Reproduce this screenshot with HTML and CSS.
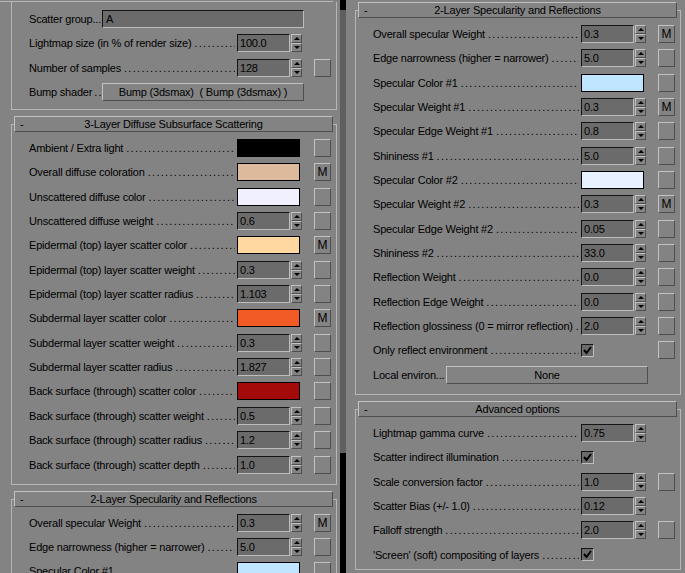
FILE: index.html
```html
<!DOCTYPE html>
<html>
	<head>
		<meta charset="UTF-8">
		<title>Subsurface shader</title>
		<link rel="stylesheet" href="styles.css">
	</head>
	<body>
		<!-- left rollout column -->
		<div class="col col-left">
			<div class="topline"></div>
			<div class="rollout first">
				<div class="body">
					<div class="row wide"><span class="lbl">Scatter group...</span><span class="field">A</span></div>
					<div class="row"><span class="lbl">Lightmap size (in % of render size)<i>..................................................</i></span><span class="spin"><span class="num">100.0</span><span class="arr"><b class="up"></b><b class="dn"></b></span></span></div>
					<div class="row"><span class="lbl">Number of samples<i>..................................................</i></span><span class="spin"><span class="num">128</span><span class="arr"><b class="up"></b><b class="dn"></b></span></span><span class="btn"></span></div>
					<div class="row wide"><span class="lbl">Bump shader<i>..................................................</i></span><span class="pbtn">Bump (3dsmax)&nbsp; ( Bump (3dsmax) )</span></div>
				</div>
			</div>

			<div class="rollout">
				<div class="head"><span class="minus">-</span><span>3-Layer Diffuse Subsurface Scattering</span></div>
				<div class="body">
					<div class="row"><span class="lbl">Ambient / Extra light<i>..................................................</i></span><span class="sw" style="background:#000000"></span><span class="btn"></span></div>
					<div class="row"><span class="lbl">Overall diffuse coloration<i>..................................................</i></span><span class="sw" style="background:#ddba9c"></span><span class="btn">M</span></div>
					<div class="row"><span class="lbl">Unscattered diffuse color<i>..................................................</i></span><span class="sw" style="background:#f1f0ff"></span><span class="btn"></span></div>
					<div class="row"><span class="lbl">Unscattered diffuse weight<i>..................................................</i></span><span class="spin"><span class="num">0.6</span><span class="arr"><b class="up"></b><b class="dn"></b></span></span><span class="btn"></span></div>
					<div class="row"><span class="lbl">Epidermal (top) layer scatter color<i>..................................................</i></span><span class="sw" style="background:#ffd7a1"></span><span class="btn">M</span></div>
					<div class="row"><span class="lbl">Epidermal (top) layer scatter weight<i>..................................................</i></span><span class="spin"><span class="num">0.3</span><span class="arr"><b class="up"></b><b class="dn"></b></span></span><span class="btn"></span></div>
					<div class="row"><span class="lbl">Epidermal (top) layer scatter radius<i>..................................................</i></span><span class="spin"><span class="num">1.103</span><span class="arr"><b class="up"></b><b class="dn"></b></span></span><span class="btn"></span></div>
					<div class="row"><span class="lbl">Subdermal layer scatter color<i>..................................................</i></span><span class="sw" style="background:#f25a26"></span><span class="btn">M</span></div>
					<div class="row"><span class="lbl">Subdermal layer scatter weight<i>..................................................</i></span><span class="spin"><span class="num">0.3</span><span class="arr"><b class="up"></b><b class="dn"></b></span></span><span class="btn"></span></div>
					<div class="row"><span class="lbl">Subdermal layer scatter radius<i>..................................................</i></span><span class="spin"><span class="num">1.827</span><span class="arr"><b class="up"></b><b class="dn"></b></span></span><span class="btn"></span></div>
					<div class="row"><span class="lbl">Back surface (through) scatter color<i>..................................................</i></span><span class="sw" style="background:#a30b0b"></span><span class="btn"></span></div>
					<div class="row"><span class="lbl">Back surface (through) scatter weight<i>..................................................</i></span><span class="spin"><span class="num">0.5</span><span class="arr"><b class="up"></b><b class="dn"></b></span></span><span class="btn"></span></div>
					<div class="row"><span class="lbl">Back surface (through) scatter radius<i>..................................................</i></span><span class="spin"><span class="num">1.2</span><span class="arr"><b class="up"></b><b class="dn"></b></span></span><span class="btn"></span></div>
					<div class="row"><span class="lbl">Back surface (through) scatter depth<i>..................................................</i></span><span class="spin"><span class="num">1.0</span><span class="arr"><b class="up"></b><b class="dn"></b></span></span><span class="btn"></span></div>
				</div>
			</div>

			<div class="rollout">
				<div class="head"><span class="minus">-</span><span>2-Layer Specularity and Reflections</span></div>
				<div class="body">
					<div class="row"><span class="lbl">Overall specular Weight<i>..................................................</i></span><span class="spin"><span class="num">0.3</span><span class="arr"><b class="up"></b><b class="dn"></b></span></span><span class="btn">M</span></div>
					<div class="row"><span class="lbl">Edge narrowness (higher = narrower)<i>..................................................</i></span><span class="spin"><span class="num">5.0</span><span class="arr"><b class="up"></b><b class="dn"></b></span></span><span class="btn"></span></div>
					<div class="row"><span class="lbl">Specular Color #1<i>..................................................</i></span><span class="sw" style="background:#c0e5ff"></span><span class="btn"></span></div>
				</div>
			</div>
		</div>

		<div class="scroll"><div class="thumb"></div><div class="track"></div><div class="thumb rest"></div></div>

		<!-- right rollout column -->
		<div class="col col-right">
			<div class="rollout">
				<div class="head"><span class="minus">-</span><span>2-Layer Specularity and Reflections</span></div>
				<div class="body">
					<div class="row"><span class="lbl">Overall specular Weight<i>..................................................</i></span><span class="spin"><span class="num">0.3</span><span class="arr"><b class="up"></b><b class="dn"></b></span></span><span class="btn">M</span></div>
					<div class="row"><span class="lbl">Edge narrowness (higher = narrower)<i>..................................................</i></span><span class="spin"><span class="num">5.0</span><span class="arr"><b class="up"></b><b class="dn"></b></span></span><span class="btn"></span></div>
					<div class="row"><span class="lbl">Specular Color #1<i>..................................................</i></span><span class="sw" style="background:#c0e5ff"></span><span class="btn"></span></div>
					<div class="row"><span class="lbl">Specular Weight #1<i>..................................................</i></span><span class="spin"><span class="num">0.3</span><span class="arr"><b class="up"></b><b class="dn"></b></span></span><span class="btn">M</span></div>
					<div class="row"><span class="lbl">Specular Edge Weight #1<i>..................................................</i></span><span class="spin"><span class="num">0.8</span><span class="arr"><b class="up"></b><b class="dn"></b></span></span><span class="btn"></span></div>
					<div class="row"><span class="lbl">Shininess #1<i>..................................................</i></span><span class="spin"><span class="num">5.0</span><span class="arr"><b class="up"></b><b class="dn"></b></span></span><span class="btn"></span></div>
					<div class="row"><span class="lbl">Specular Color #2<i>..................................................</i></span><span class="sw" style="background:#e7f1ff"></span><span class="btn"></span></div>
					<div class="row"><span class="lbl">Specular Weight #2<i>..................................................</i></span><span class="spin"><span class="num">0.3</span><span class="arr"><b class="up"></b><b class="dn"></b></span></span><span class="btn">M</span></div>
					<div class="row"><span class="lbl">Specular Edge Weight #2<i>..................................................</i></span><span class="spin"><span class="num">0.05</span><span class="arr"><b class="up"></b><b class="dn"></b></span></span><span class="btn"></span></div>
					<div class="row"><span class="lbl">Shininess #2<i>..................................................</i></span><span class="spin"><span class="num">33.0</span><span class="arr"><b class="up"></b><b class="dn"></b></span></span><span class="btn"></span></div>
					<div class="row"><span class="lbl">Reflection Weight<i>..................................................</i></span><span class="spin"><span class="num">0.0</span><span class="arr"><b class="up"></b><b class="dn"></b></span></span><span class="btn"></span></div>
					<div class="row"><span class="lbl">Reflection Edge Weight<i>..................................................</i></span><span class="spin"><span class="num">0.0</span><span class="arr"><b class="up"></b><b class="dn"></b></span></span><span class="btn"></span></div>
					<div class="row"><span class="lbl">Reflection glossiness (0 = mirror reflection)<i>..................................................</i></span><span class="spin"><span class="num">2.0</span><span class="arr"><b class="up"></b><b class="dn"></b></span></span><span class="btn"></span></div>
					<div class="row"><span class="lbl">Only reflect environment<i>..................................................</i></span><span class="chk"><svg width="11" height="11" viewBox="0 0 11 11"><polyline points="2,5 4.5,8 9,2" fill="none" stroke="#000" stroke-width="2"/></svg></span><span class="btn"></span></div>
					<div class="row wide"><span class="lbl">Local environ...</span><span class="pbtn">None</span></div>
				</div>
			</div>

			<div class="rollout last">
				<div class="head"><span class="minus">-</span><span>Advanced options</span></div>
				<div class="body">
					<div class="row"><span class="lbl">Lightmap gamma curve<i>..................................................</i></span><span class="spin"><span class="num">0.75</span><span class="arr"><b class="up"></b><b class="dn"></b></span></span></div>
					<div class="row"><span class="lbl">Scatter indirect illumination<i>..................................................</i></span><span class="chk"><svg width="11" height="11" viewBox="0 0 11 11"><polyline points="2,5 4.5,8 9,2" fill="none" stroke="#000" stroke-width="2"/></svg></span></div>
					<div class="row"><span class="lbl">Scale conversion factor<i>..................................................</i></span><span class="spin"><span class="num">1.0</span><span class="arr"><b class="up"></b><b class="dn"></b></span></span><span class="btn"></span></div>
					<div class="row"><span class="lbl">Scatter Bias (+/- 1.0)<i>..................................................</i></span><span class="spin"><span class="num">0.12</span><span class="arr"><b class="up"></b><b class="dn"></b></span></span></div>
					<div class="row"><span class="lbl">Falloff strength<i>..................................................</i></span><span class="spin"><span class="num">2.0</span><span class="arr"><b class="up"></b><b class="dn"></b></span></span><span class="btn"></span></div>
					<div class="row"><span class="lbl">'Screen' (soft) compositing of layers<i>..................................................</i></span><span class="chk"><svg width="11" height="11" viewBox="0 0 11 11"><polyline points="2,5 4.5,8 9,2" fill="none" stroke="#000" stroke-width="2"/></svg></span></div>
				</div>
			</div>
		</div>
	</body>
</html>
```

FILE: styles.css
```css
html, body{
	margin: 0;
	height: 573px;
	overflow: hidden;
}
body{
	background: #838383;
	color: #000;
	font: 11px/18px "Liberation Sans", Arial, sans-serif;
	letter-spacing: -0.2px;
	display: flex;
}
.col-left{
	width: 329px;
	padding-left: 11px;
	flex: none;
}
.col-right{
	padding: 2px 0 0 9px;
	flex: none;
}
.topline{
	height: 1px;
	margin: 1px 0 0 -11px;
	width: 333px;
	background: #b6b6b6;
}

/* scrollbar strip between the columns */
.scroll{
	width: 6px;
	flex: none;
	display: flex;
	flex-direction: column;
}
.scroll .thumb{
	height: 10px;
	background: #000;
}
.scroll .track{
	height: 443px;
	background: #5f5f5f;
}
.scroll .rest{
	flex: 1;
}

/* rollouts */
.rollout{
	width: 326px;
}
.rollout + .rollout{
	margin-top: 6px;
}
.head{
	position: relative;
	z-index: 1;
	height: 16px;
	box-sizing: border-box;
	margin: 0 4px 0 3px;
	border: 1px solid;
	border-color: #c2c2c2 #4e4e4e #4e4e4e #c2c2c2;
	background: #838383;
	display: grid;
	grid-template-columns: 1fr auto 1fr;
	line-height: 14px;
}
.head .minus{
	padding-left: 5px;
}
.body{
	border: 1px solid #b6b6b6;
	margin-top: -8px;
	padding: 14px 0 10px 17px;
	display: flex;
	flex-direction: column;
	gap: 6.35px;
}
.first .body{
	border-top: none;
	margin-top: 0;
	padding-top: 8px;
	padding-bottom: 8px;
}
.last .body{
	padding-bottom: 5px;
}

/* rows */
.row{
	display: grid;
	grid-template-columns: 208px 77px 17px;
	height: 18px;
	align-items: center;
}
.row.wide{
	grid-template-columns: 73px 202px;
}
.lbl{
	display: flex;
	white-space: nowrap;
	overflow: hidden;
	padding-right: 2px;
}
.wide .lbl{
	padding-right: 0;
}
.lbl i{
	flex: 1 1 0;
	min-width: 0;
	overflow: hidden;
	font-style: normal;
	letter-spacing: 1.3px;
	padding-left: 3px;
}
.wide .lbl i{
	padding-left: 2px;
}
.spin{
	display: flex;
	gap: 1px;
}
.num, .field, .chk{
	box-sizing: border-box;
	background: #6b6b6b;
	border: 1px solid;
	border-color: #151515 #bdbdbd #bdbdbd #151515;
}
.num{
	width: 53px;
	height: 18px;
	padding-left: 2px;
	line-height: 16px;
}
.field{
	height: 18px;
	padding-left: 3px;
	line-height: 16px;
}
.arr{
	width: 11px;
	height: 18px;
	display: flex;
	flex-direction: column;
}
.arr b, .btn, .pbtn{
	box-sizing: border-box;
	border: 1px solid;
	border-color: #c2c2c2 #4e4e4e #4e4e4e #c2c2c2;
}
.arr b{
	flex: 1;
	display: flex;
	align-items: center;
	justify-content: center;
}
.arr b::after{
	content: '';
	border-left: 3px solid transparent;
	border-right: 3px solid transparent;
}
.arr .up::after{
	border-bottom: 3px solid #000;
}
.arr .dn::after{
	border-top: 3px solid #000;
}
.btn{
	width: 17px;
	height: 18px;
	text-align: center;
	line-height: 16px;
	font-size: 12px;
	letter-spacing: 0;
}
.pbtn{
	height: 18px;
	text-align: center;
	line-height: 16px;
}
.sw{
	width: 63px;
	height: 18px;
	box-sizing: border-box;
	border: 1px solid #000;
}
.chk{
	width: 13px;
	height: 13px;
	display: flex;
	align-items: center;
	justify-content: center;
}
```
